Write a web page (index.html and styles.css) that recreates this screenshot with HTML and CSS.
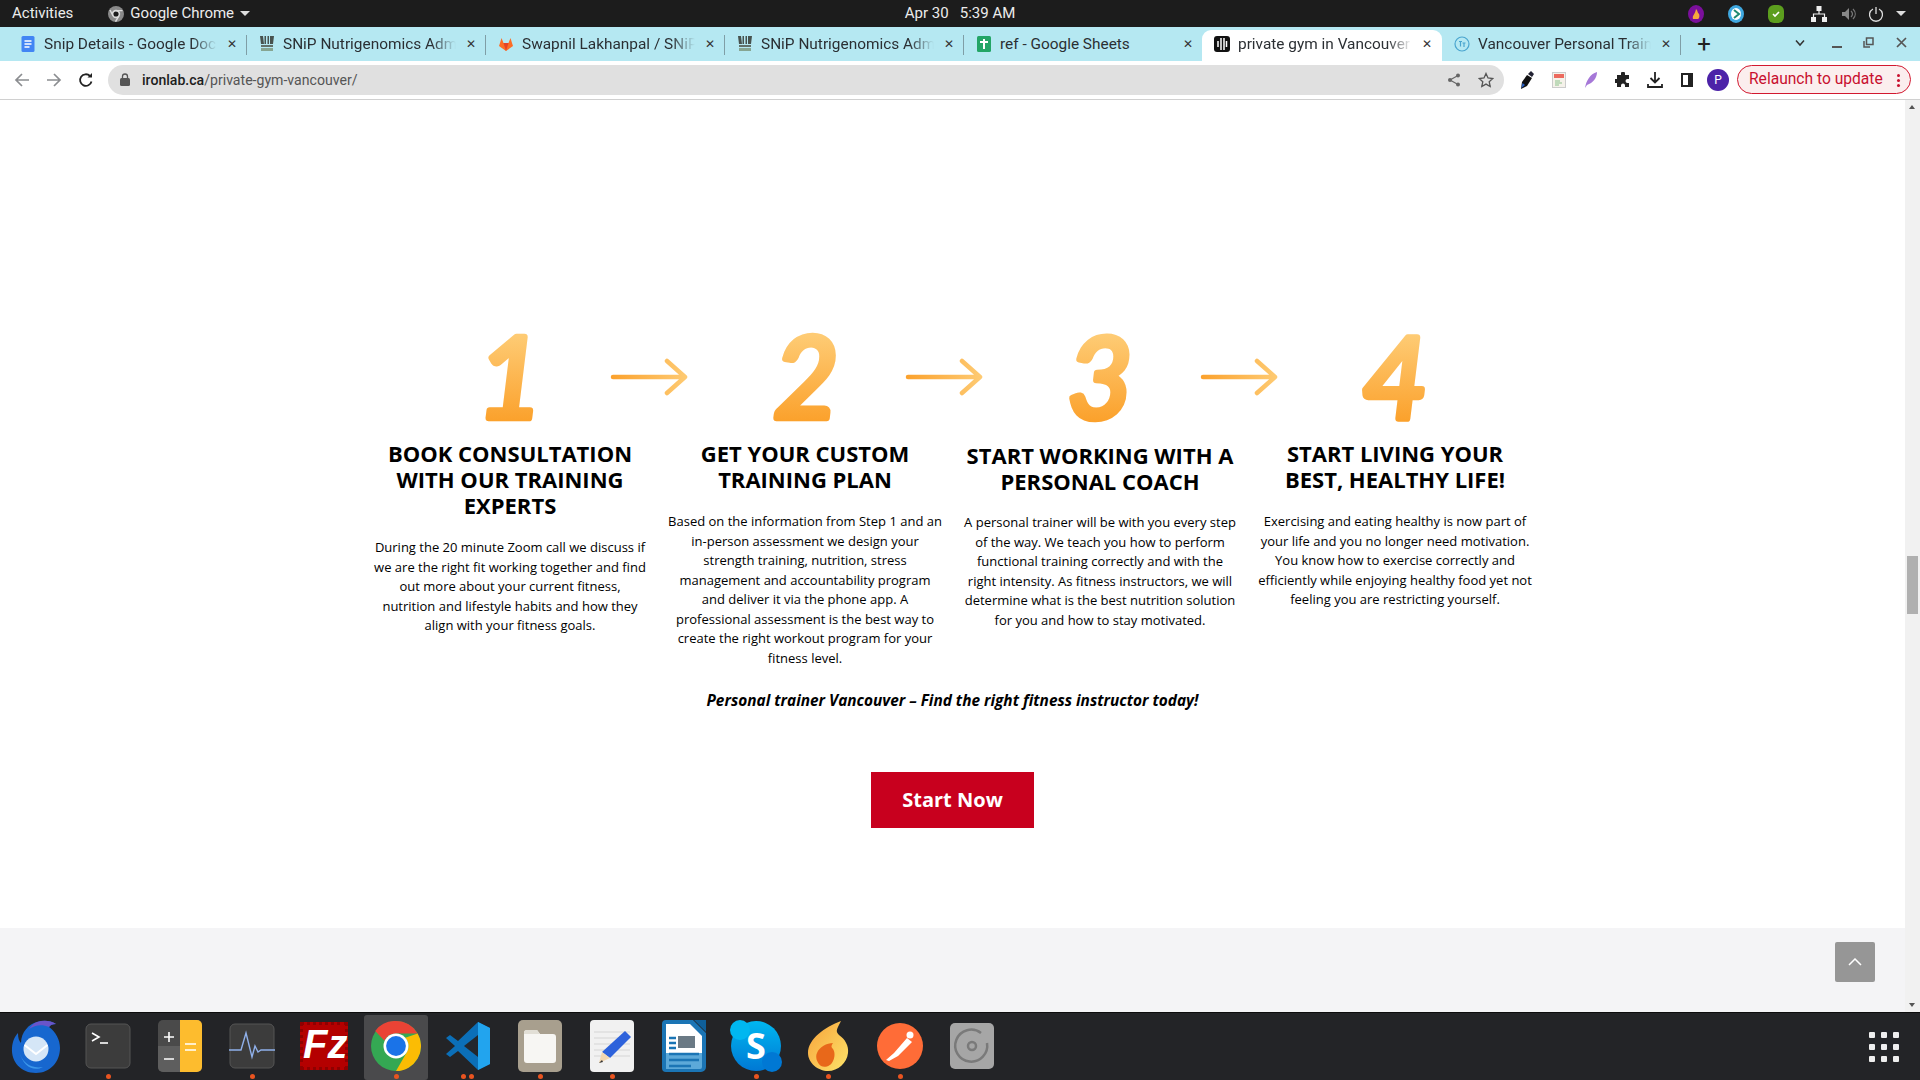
FILE: index.html
```html
<!DOCTYPE html>
<html lang="en">
<head>
<meta charset="utf-8">
<title>private gym in Vancouver</title>
<link rel="stylesheet" href="styles.css">
</head>
<body>
<header class="topbar">
  <div class="top-left">
    <span class="activities">Activities</span>
    <span class="app-menu">
      <svg width="16" height="16" viewBox="0 0 16 16"><circle cx="8" cy="8" r="8" fill="#8a8a8a"/><circle cx="8" cy="8" r="3.4" fill="#1c1c1c" stroke="#ddd" stroke-width="1.6"/><path d="M8 4.6h6.5M5 9.8 2 4M10.9 9.8 7.5 15.7" stroke="#ddd" stroke-width="1.4"/></svg>
      Google Chrome
      <i class="caret"></i>
    </span>
  </div>
  <div class="clock">Apr 30&nbsp;&nbsp;&nbsp;5:39 AM</div>
  <div class="tray">
    <svg class="tray-a" width="16" height="18" viewBox="0 0 16 18"><ellipse cx="8" cy="9" rx="8" ry="9" fill="#7b0f9c"/><path d="M5 14c-1-4 2-4 3-10 2 2 1 3 3 5 1 2 0 5-1 5z" fill="#f6a93b"/></svg>
    <svg class="tray-b" width="16" height="18" viewBox="0 0 16 18"><ellipse cx="8" cy="9" rx="8" ry="9" fill="#3fa8e0"/><ellipse cx="8" cy="9" rx="5" ry="6" fill="#fff"/><path d="M6 5l5 4-5 4" fill="none" stroke="#1f8a70" stroke-width="2"/></svg>
    <svg class="tray-c" width="16" height="18" viewBox="0 0 16 18"><rect width="16" height="18" rx="6" fill="#5c9e1e"/><path d="M5 9l2 2 4-4" fill="none" stroke="#fff" stroke-width="1.6"/></svg>
    <svg class="tray-d" width="16" height="16" viewBox="0 0 16 16" fill="#eee"><rect x="5.5" y="0" width="5" height="5"/><rect x="0" y="11" width="5" height="5"/><rect x="11" y="11" width="5" height="5"/><path d="M8 5v3M2.500 11V8h11v3" fill="none" stroke="#eee" stroke-width="1.2"/></svg>
    <svg class="tray-e" width="16" height="16" viewBox="0 0 16 16"><path d="M1 6h3l4-4v12l-4-4H1z" fill="#888"/><path d="M10 5c2 2 2 4 0 6M12 3c3 3 3 7 0 10" fill="none" stroke="#777" stroke-width="1.2"/></svg>
    <svg class="tray-f" width="16" height="16" viewBox="0 0 16 16" fill="none" stroke="#ddd" stroke-width="1.3"><path d="M5 3a6.500 6.500 0 1 0 6 0M8 1v7"/></svg>
    <i class="caret tray-caret"></i>
  </div>
</header>

<nav class="tabstrip">
  <div class="tab">
    <svg class="fav" width="16" height="16" viewBox="0 0 16 16"><rect x="1.500" width="13" height="16" rx="1.500" fill="#4285f4"/><path d="M4.500 5h7M4.500 8h7M4.500 11h5" stroke="#fff" stroke-width="1.300"/></svg>
    <span class="tab-title">Snip Details - Google Docs</span><span class="x">✕</span>
  </div>
  <div class="tab">
    <svg class="fav" width="16" height="18" viewBox="0 0 16 18"><path d="M1 1h3l1 8H2zM5.500 1H7v8H5.500zM8.500 1H10v8H8.500zM11 1h4l-1 8h-3z" fill="#47524e"/><path d="M2 10h12v2H2z" fill="#62706a"/><rect x="2" y="13" width="12" height="3" fill="#86a592"/></svg>
    <span class="tab-title">SNiP Nutrigenomics Admin</span><span class="x">✕</span>
  </div>
  <div class="tab">
    <svg class="fav" width="16" height="16" viewBox="0 0 16 16"><path d="M8 15 1 10l1-3 1.500-5L5.500 7h5l2-5L14 7l1 3z" fill="#fc6d26"/><path d="M8 15 5.500 7h5z" fill="#e24329"/></svg>
    <span class="tab-title">Swapnil Lakhanpal / SNiP</span><span class="x">✕</span>
  </div>
  <div class="tab">
    <svg class="fav" width="16" height="18" viewBox="0 0 16 18"><path d="M1 1h3l1 8H2zM5.500 1H7v8H5.500zM8.500 1H10v8H8.500zM11 1h4l-1 8h-3z" fill="#47524e"/><path d="M2 10h12v2H2z" fill="#62706a"/><rect x="2" y="13" width="12" height="3" fill="#86a592"/></svg>
    <span class="tab-title">SNiP Nutrigenomics Admin</span><span class="x">✕</span>
  </div>
  <div class="tab">
    <svg class="fav" width="16" height="16" viewBox="0 0 16 16"><rect x="1" width="14" height="16" rx="1.500" fill="#23a566"/><path d="M4 6h8M8 3v10" stroke="#fff" stroke-width="2"/></svg>
    <span class="tab-title tab-plain">ref - Google Sheets</span><span class="x">✕</span>
  </div>
  <div class="tab tab-active">
    <svg class="fav" width="16" height="16" viewBox="0 0 16 16"><rect width="16" height="16" rx="3" fill="#111"/><path d="M4 5v6M7 2v12M10 2v12M12.500 5v6" stroke="#fff" stroke-width="1.500"/></svg>
    <span class="tab-title">private gym in Vancouver</span><span class="x">✕</span>
  </div>
  <div class="tab tab-last">
    <svg class="fav" width="16" height="16" viewBox="0 0 16 16" fill="none" stroke="#4aa5cf" stroke-width="1.200"><circle cx="8" cy="8" r="7"/><path d="M5 5.500h3M6.500 5.500v5M8.500 7h3M10 7v4"/></svg>
    <span class="tab-title">Vancouver Personal Trainer</span><span class="x">✕</span>
  </div>
  <span class="newtab">+</span>
  <div class="win-controls">
    <svg width="12" height="8" viewBox="0 0 12 8" fill="none" stroke="#333" stroke-width="1.500"><path d="M2 1.500 6 6l4-4.500"/></svg>
    <svg class="win-min" width="10" height="10" viewBox="0 0 10 10"><rect y="8" width="10" height="2" fill="#555"/></svg>
    <svg class="win-max" width="11" height="11" viewBox="0 0 11 11" fill="none" stroke="#555" stroke-width="1.500"><rect x="3.500" y="1" width="6.500" height="6.500"/><path d="M1 4v6h6"/></svg>
    <svg class="win-close" width="11" height="11" viewBox="0 0 11 11" stroke="#555" stroke-width="1.700"><path d="M1 1l9 9M10 1l-9 9"/></svg>
  </div>
</nav>

<div class="toolbar">
  <span class="tool"><svg width="16" height="16" viewBox="0 0 16 16" fill="none" stroke="#8b8d90" stroke-width="1.700"><path d="M15 8H2M8 2 2 8l6 6"/></svg></span>
  <span class="tool"><svg width="16" height="16" viewBox="0 0 16 16" fill="none" stroke="#8b8d90" stroke-width="1.700"><path d="M1 8h13M8 2l6 6-6 6"/></svg></span>
  <span class="tool"><svg width="16" height="16" viewBox="0 0 16 16" fill="none" stroke="#222" stroke-width="1.800"><path d="M13.500 9.500A5.800 5.800 0 1 1 12 4"/><path d="M14 1v4.500H9.500" fill="#222" stroke="none"/></svg></span>
  <div class="omnibox">
    <svg width="10" height="13" viewBox="0 0 10 13"><rect y="5" width="10" height="8" rx="1.500" fill="#555"/><path d="M2.500 5V3.500a2.500 2.500 0 0 1 5 0V5" fill="none" stroke="#555" stroke-width="1.300"/></svg>
    <span class="url"><b>ironlab.ca</b>/private-gym-vancouver/</span>
    <svg class="omni-share" width="14" height="14" viewBox="0 0 14 14" fill="#666"><circle cx="11" cy="2.500" r="2"/><circle cx="3" cy="7" r="2"/><circle cx="11" cy="11.500" r="2"/><path d="M11 2.500 3 7l8 4.500" fill="none" stroke="#666" stroke-width="1.200"/></svg>
    <svg class="omni-star" width="16" height="16" viewBox="0 0 16 16" fill="none" stroke="#555" stroke-width="1.300"><path d="M8 1.500l2 4.500 4.800.5-3.600 3.200 1 4.800L8 12.100l-4.200 2.400 1-4.800L1.200 6.500 6 6z"/></svg>
  </div>
  <div class="extensions">
    <span class="tool"><svg width="16" height="20" viewBox="0 0 16 20"><path d="M2 19l1-7 5-7 5 3-5 8z" fill="#111"/><path d="M9 4l3-3 3 3-2 3z" fill="#223"/><path d="M2.500 18l1-5 2.500 2z" fill="#2a62c9"/></svg></span>
    <span class="tool"><svg width="14" height="16" viewBox="0 0 14 16"><rect x=".5" y=".5" width="13" height="15" fill="#f5f2ea" stroke="#ccc"/><rect x="2" y="2" width="10" height="4" fill="#ec6a5e"/><path d="M3 9h5M3 11h7M3 13h4" stroke="#8bc28b"/></svg></span>
    <span class="tool"><svg width="14" height="18" viewBox="0 0 14 18"><path d="M1 17C2 10 6 3 13 1c0 6-4 11-10 13z" fill="#a678d8"/></svg></span>
    <span class="tool"><svg width="16" height="16" viewBox="0 0 16 16" fill="#222"><path d="M6 1.500a2 2 0 0 1 4 0V3h4v4h-1.500a2 2 0 0 0 0 4H14v4h-4v-1.500a2 2 0 0 0-4 0V15H2v-4H.5a2 2 0 0 1 0-4H2V3h4z"/></svg></span>
    <span class="tool"><svg width="16" height="16" viewBox="0 0 16 16" fill="none" stroke="#222" stroke-width="1.800"><path d="M8 0v10M3.500 6 8 10.500 12.500 6M1 12v3h14v-3"/></svg></span>
    <span class="tool"><svg width="12" height="14" viewBox="0 0 12 14"><path d="M0 0h12v14H0z" fill="#222"/><rect x="2" y="2" width="5" height="10" fill="#fff"/></svg></span>
    <span class="avatar">P</span>
  </div>
  <div class="relaunch"><span>Relaunch to update</span><i class="dots"></i></div>
</div>

<div class="viewport">
  <main class="page">
    <section class="content">
      <div class="steps">
        <article class="step">
          <div class="digit-row">
            <svg class="digit" width="120" height="140" viewBox="0 0 120 140"><defs><linearGradient id="g1" gradientUnits="userSpaceOnUse" x1="0" y1="26" x2="0" y2="112"><stop offset="0" stop-color="#fecb74"/><stop offset="1" stop-color="#fba12c"/></linearGradient></defs><text class="digit-text" x="60" y="109" fill="url(#g1)" stroke="url(#g1)">1</text></svg>
            <svg class="arrow" width="78" height="38" viewBox="0 0 78 38"><defs><linearGradient id="a1" gradientUnits="userSpaceOnUse" x1="0" y1="0" x2="78" y2="0"><stop offset="0" stop-color="#fba12c"/><stop offset="1" stop-color="#fecb74"/></linearGradient></defs><path d="M3 19h71M57 3l18 16-18 16" fill="none" stroke="url(#a1)" stroke-width="4.500" stroke-linecap="round" stroke-linejoin="round"/></svg>
          </div>
          <h2>BOOK CONSULTATION WITH OUR TRAINING EXPERTS</h2>
          <p>During the 20 minute Zoom call we discuss if we are the right fit working together and find out more about your current fitness, nutrition and lifestyle habits and how they align with your fitness goals.</p>
        </article>
        <article class="step">
          <div class="digit-row">
            <svg class="digit" width="120" height="140" viewBox="0 0 120 140"><defs><linearGradient id="g2" gradientUnits="userSpaceOnUse" x1="0" y1="26" x2="0" y2="112"><stop offset="0" stop-color="#fecb74"/><stop offset="1" stop-color="#fba12c"/></linearGradient></defs><text class="digit-text" x="61" y="109" fill="url(#g2)" stroke="url(#g2)">2</text></svg>
            <svg class="arrow" width="78" height="38" viewBox="0 0 78 38"><defs><linearGradient id="a2" gradientUnits="userSpaceOnUse" x1="0" y1="0" x2="78" y2="0"><stop offset="0" stop-color="#fba12c"/><stop offset="1" stop-color="#fecb74"/></linearGradient></defs><path d="M3 19h71M57 3l18 16-18 16" fill="none" stroke="url(#a2)" stroke-width="4.500" stroke-linecap="round" stroke-linejoin="round"/></svg>
          </div>
          <h2>GET YOUR CUSTOM TRAINING PLAN</h2>
          <p>Based on the information from Step 1 and an in-person assessment we design your strength training, nutrition, stress management and accountability program and deliver it via the phone app. A professional assessment is the best way to create the right workout program for your fitness level.</p>
        </article>
        <article class="step step-low">
          <div class="digit-row">
            <svg class="digit" width="120" height="140" viewBox="0 0 120 140"><defs><linearGradient id="g3" gradientUnits="userSpaceOnUse" x1="0" y1="26" x2="0" y2="112"><stop offset="0" stop-color="#fecb74"/><stop offset="1" stop-color="#fba12c"/></linearGradient></defs><text class="digit-text" x="60" y="109" fill="url(#g3)" stroke="url(#g3)">3</text></svg>
            <svg class="arrow" width="78" height="38" viewBox="0 0 78 38"><defs><linearGradient id="a3" gradientUnits="userSpaceOnUse" x1="0" y1="0" x2="78" y2="0"><stop offset="0" stop-color="#fba12c"/><stop offset="1" stop-color="#fecb74"/></linearGradient></defs><path d="M3 19h71M57 3l18 16-18 16" fill="none" stroke="url(#a3)" stroke-width="4.500" stroke-linecap="round" stroke-linejoin="round"/></svg>
          </div>
          <h2>START WORKING WITH A PERSONAL COACH</h2>
          <p>A personal trainer will be with you every step of the way. We teach you how to perform functional training correctly and with the right intensity. As fitness instructors, we will determine what is the best nutrition solution for you and how to stay motivated.</p>
        </article>
        <article class="step">
          <div class="digit-row">
            <svg class="digit" width="120" height="140" viewBox="0 0 120 140"><defs><linearGradient id="g4" gradientUnits="userSpaceOnUse" x1="0" y1="26" x2="0" y2="112"><stop offset="0" stop-color="#fecb74"/><stop offset="1" stop-color="#fba12c"/></linearGradient></defs><text class="digit-text" x="60" y="109" fill="url(#g4)" stroke="url(#g4)">4</text></svg>
          </div>
          <h2>START LIVING YOUR BEST, HEALTHY LIFE!</h2>
          <p>Exercising and eating healthy is now part of your life and you no longer need motivation. You know how to exercise correctly and efficiently while enjoying healthy food yet not feeling you are restricting yourself.</p>
        </article>
      </div>
      <p class="tagline">Personal trainer Vancouver – Find the right fitness instructor today!</p>
      <a class="cta">Start Now</a>
    </section>
    <div class="band">
      <span class="to-top"><svg width="14" height="8" viewBox="0 0 14 8" fill="none" stroke="#fff" stroke-width="1.500"><path d="M1 7l6-6 6 6"/></svg></span>
    </div>
  </main>
  <aside class="scrollbar">
    <i class="arrow-up"></i>
    <i class="thumb"></i>
    <i class="arrow-down"></i>
  </aside>
</div>

<footer class="dock">
  <div class="dock-item">
    <svg width="50" height="56" viewBox="0 0 50 56"><path d="M25 55C10 55 0 44 1 30 1.500 23 4 18 7 15c0 5 1 8 3 10C10 14 18 6 26 4c6-2 13-2 19 2-3 0-6 1-7 3 7 5 11 13 11 21 0 14-10 25-24 25z" fill="#1767cf"/><path d="M26 4c6-2 13-2 19 2-3 0-6 1-7 3-7-3-14-2-20 2 2-3 5-6 8-7z" fill="#6a54c9"/><path d="M8 33c3 12 12 18 24 16-9 5-20 0-24-16z" fill="#3d98ea"/><circle cx="25" cy="31" r="12.500" fill="#d5e6f7"/><path d="M13.500 27 25 36l11.500-9" fill="none" stroke="#fff" stroke-width="2"/></svg>
  </div>
  <div class="dock-item has-dot">
    <svg width="46" height="46" viewBox="0 0 46 46"><rect x="1" y="1" width="44" height="44" rx="5" fill="#3c3c3c" stroke="#555"/><path d="M7 10l7 4-7 4" fill="none" stroke="#fff" stroke-width="1.600"/><path d="M15 20h8" stroke="#fff" stroke-width="1.600"/></svg>
  </div>
  <div class="dock-item">
    <svg width="46" height="54" viewBox="0 0 46 54"><rect x="1" y="1" width="44" height="52" rx="5" fill="#4a4a4a"/><path d="M1 27h22v26H6a5 5 0 0 1-5-5z" fill="#5e5e5e"/><path d="M23 1h17a5 5 0 0 1 5 5v42a5 5 0 0 1-5 5H23z" fill="#fdbc2e"/><path d="M7 18h10M12 13v10M7 40h10M28 25h11M28 31h11" stroke="#fff" stroke-width="1.600"/></svg>
  </div>
  <div class="dock-item has-dot">
    <svg width="46" height="46" viewBox="0 0 46 46"><rect x="1" y="1" width="44" height="44" rx="5" fill="#3c3c3c" stroke="#555"/><path d="M0 27h12l5-17 6 24 3-11 3 6 3-2h14" fill="none" stroke="#8fb0ea" stroke-width="1.400"/></svg>
  </div>
  <div class="dock-item">
    <div class="fz"><span>Fz</span></div>
  </div>
  <div class="dock-item has-dot dock-active">
    <svg width="50" height="50" viewBox="0 0 48 48"><circle cx="24" cy="24" r="24" fill="#34a853"/><path d="M24 0a24 24 0 0 1 20.800 12H24a12 12 0 0 0-11 7L4 9.500A24 24 0 0 1 24 0z" fill="#ea4335"/><path d="M44.800 12A24 24 0 0 1 24 48l10.400-18A12 12 0 0 0 33 16z" fill="#fbbc04"/><circle cx="24" cy="24" r="12" fill="#fff"/><circle cx="24" cy="24" r="9.500" fill="#1a73e8"/></svg>
  </div>
  <div class="dock-item has-dot2">
    <svg width="46" height="50" viewBox="0 0 46 50"><path d="M33 1 45 7v36l-12 6-20-19-8 6-4-3 9-8-9-8 4-3 8 6z" fill="#0b6fb8"/><path d="M33 1 45 7v36l-12 6z" fill="#22a4ee"/><path d="M33 14 19 25l14 11z" fill="#23272d"/></svg>
  </div>
  <div class="dock-item has-dot">
    <svg width="46" height="54" viewBox="0 0 46 54"><rect x="1" y="1" width="44" height="52" rx="5" fill="#a89f8e"/><path d="M7 14a3 3 0 0 1 3-3h10l3 4h13a3 3 0 0 1 3 3v23a3 3 0 0 1-3 3H10a3 3 0 0 1-3-3z" fill="#f7f6f3"/><path d="M7 14a3 3 0 0 1 3-3h10l3 4H7z" fill="#e2dfd6"/></svg>
  </div>
  <div class="dock-item has-dot">
    <svg width="46" height="54" viewBox="0 0 46 54"><rect x="1" y="1" width="44" height="52" rx="4" fill="#f1f1f1"/><path d="M5 13h36M5 19h36M5 25h36M5 31h36M5 37h36" stroke="#d5d5d5"/><path d="M36 12l6 6-21 21-8-6z" fill="#2d62db"/><path d="M13 33l8 6-11 5z" fill="#f2d7b0"/><path d="M10 44l3-3 1 2z" fill="#333"/></svg>
  </div>
  <div class="dock-item">
    <svg width="46" height="54" viewBox="0 0 46 54"><path d="M5 1h27l13 13v34a5 5 0 0 1-5 5H5a4 4 0 0 1-4-4V5a4 4 0 0 1 4-4z" fill="#1b75b5"/><path d="M5 34h36v14a2 2 0 0 1-2 2H5z" fill="#5ca9d9"/><path d="M5 5h24l12 12v17H5z" fill="#fff"/><path d="M33 1l12 12V1z" fill="#0f5f99"/><rect x="17" y="17" width="17" height="12" fill="#6b7a85"/><path d="M8 19h7M8 24h7M8 29h7M8 35h30M8 41h30M8 47h22" stroke="#1b75b5" stroke-width="2.400"/></svg>
  </div>
  <div class="dock-item has-dot">
    <div class="skype"><span>S</span></div>
  </div>
  <div class="dock-item has-dot">
    <svg width="42" height="50" viewBox="0 0 42 50"><defs><linearGradient id="sp" x1="0" y1="0" x2="1" y2="1"><stop offset="0" stop-color="#f7a13a"/><stop offset="1" stop-color="#fde46a"/></linearGradient></defs><path d="M34 0C30 8 28 10 32 14c6 4 10 11 9 18-1 10-10 18-20 18S1 42 1 32C1 18 18 6 34 0z" fill="url(#sp)"/><path d="M26 22c-2 3-2 4 0 6 2 3 2 8 0 12-2 5-8 7-12 5-4-3-6-9-4-13 2-6 10-10 16-10z" fill="#e8681a"/></svg>
  </div>
  <div class="dock-item has-dot">
    <svg width="46" height="46" viewBox="0 0 46 46"><circle cx="23" cy="23" r="23" fill="#ff6c37"/><circle cx="33" cy="12" r="3.500" fill="#fff"/><path d="M30 15 17 30l-8 7 3 1 9-5 14-14z" fill="#fff"/></svg>
  </div>
  <div class="dock-item">
    <svg width="46" height="46" viewBox="0 0 46 46"><rect x="1" y="0" width="44" height="46" rx="5" fill="#a6a6a6"/><path d="M32 10a16 16 0 1 0 6 10" fill="none" stroke="#7a7a7a" stroke-width="2.500"/><circle cx="23" cy="23" r="4" fill="none" stroke="#7a7a7a" stroke-width="2.500"/></svg>
  </div>
  <div class="grid-launcher">
    <i></i><i></i><i></i><i></i><i></i><i></i><i></i><i></i><i></i>
  </div>
</footer>
</body>
</html>
```
FILE: styles.css
```css
* { box-sizing: border-box; }
html, body { margin: 0; height: 100%; }
body {
  display: flex;
  flex-direction: column;
  height: 100vh;
  overflow: hidden;
  background: #fff;
  font-family: "Open Sans", sans-serif;
}
svg { display: block; flex: none; }

/* GNOME bar */
.topbar {
  height: 27px;
  flex: none;
  background: #1c1c1c;
  color: #ececec;
  font: 15px/27px Roboto, sans-serif;
  display: grid;
  grid-template-columns: 1fr auto 1fr;
  padding-left: 12px;
}
.top-left { display: flex; align-items: center; gap: 35px; }
.app-menu { display: flex; align-items: center; gap: 6px; }
.caret {
  width: 0; height: 0;
  border-left: 5px solid transparent;
  border-right: 5px solid transparent;
  border-top: 5px solid #ddd;
}
.clock { text-align: center; position: relative; left: -6px; }
.tray { display: flex; align-items: center; justify-content: flex-end; padding-right: 14px; }
.tray-a { margin-right: 24px; }
.tray-b { margin-right: 24px; }
.tray-c { margin-right: 27px; }
.tray-d { margin-right: 14px; }
.tray-e { margin-right: 11px; }
.tray-f { margin-right: 12px; }

/* Tabs */
.tabstrip {
  height: 34px;
  flex: none;
  background: #b5e8f2;
  display: flex;
  align-items: flex-end;
  padding-left: 8px;
  font: 15.400px Roboto, sans-serif;
  color: #2b2f33;
}
.tab {
  width: 239px;
  height: 31px;
  flex: none;
  padding: 0 8px 3px 12px;
  display: flex;
  align-items: center;
  gap: 8px;
  position: relative;
  border-radius: 9px 9px 0 0;
}
.tab::after {
  content: "";
  position: absolute;
  right: 0;
  top: 5px;
  height: 20px;
  width: 1px;
  background: #7f9ea6;
}
.tab-active { background: #fff; width: 240px; margin-left: -1px; }
.tab-active::after, .tab:nth-child(5)::after { display: none; }
.tab-title {
  flex: 1;
  min-width: 0;
  white-space: nowrap;
  overflow: hidden;
  -webkit-mask-image: linear-gradient(90deg, #000 86%, transparent 100%);
  mask-image: linear-gradient(90deg, #000 86%, transparent 100%);
}
.tab-plain { -webkit-mask-image: none; mask-image: none; }
.x { font-size: 12px; width: 14px; text-align: center; color: #333; }
.newtab { font-size: 24px; line-height: 30px; width: 20px; margin-left: 13px; text-align: center; align-self: center; color: #222; }
.win-controls { display: flex; align-items: center; margin-left: 80px; padding-bottom: 3px; align-self: center; }
.win-min { margin-left: 26px; }
.win-max { margin-left: 21px; }
.win-close { margin-left: 22px; }

/* Toolbar */
.toolbar {
  height: 39px;
  flex: none;
  background: #fff;
  border-bottom: 1px solid #d0d0d0;
  display: flex;
  align-items: center;
  padding: 0 0 1px 6px;
}
.tool { width: 32px; height: 30px; display: flex; align-items: center; justify-content: center; flex: none; }
.omnibox {
  width: 1396px;
  height: 30px;
  margin-left: 6px;
  background: #e0e0e0;
  border-radius: 15px;
  display: flex;
  align-items: center;
  padding-left: 12px;
  flex: none;
}
.url { font: 14.100px Roboto, sans-serif; color: #555; margin-left: 12px; flex: 1; }
.url b { font-weight: 500; color: #1d1d1d; }
.omni-share { margin-right: 17px; }
.omni-star { margin-right: 10px; }
.extensions { display: flex; align-items: center; margin-left: 7px; }
.avatar {
  width: 22px; height: 22px;
  margin: 0 6px 0 4px;
  border-radius: 50%;
  background: #4c22a8;
  color: #fff;
  font: 12px/22px Roboto, sans-serif;
  text-align: center;
}
.relaunch {
  width: 174px;
  height: 29px;
  border: 1px solid #d2182f;
  border-radius: 15px;
  background: #fbeeee;
  color: #c8102e;
  font: 15.600px/27px Roboto, sans-serif;
  padding-left: 11px;
  display: flex;
  align-items: center;
  margin-left: 2px;
  position: relative;
}
.dots {
  position: absolute;
  right: 10px;
  top: 8px;
  width: 3px;
  height: 3px;
  background: #c8102e;
  box-shadow: 0 5px 0 #c8102e, 0 10px 0 #c8102e;
  border-radius: 50%;
}

/* Page */
.viewport { flex: 1; min-height: 0; display: flex; }
.page { flex: 1; min-width: 0; display: flex; flex-direction: column; }
.content {
  flex: 1;
  padding-top: 230px;
  display: flex;
  flex-direction: column;
  align-items: center;
  color: #000;
}
.steps { display: grid; grid-template-columns: repeat(4, 295px); height: 338px; }
.step { text-align: center; padding: 0 10px; }
.digit-row { position: relative; height: 100px; display: flex; justify-content: center; }
.digit { margin: -21px 0 -19px; }
.digit-text {
  font: italic 400 113px Lato, sans-serif;
  text-anchor: middle;
  stroke-width: 6.500;
  stroke-linejoin: round;
}
.arrow { position: absolute; left: 237px; top: 28px; }
.step h2 {
  margin: 10px 0 20px;
  font: 700 22px/26px "Open Sans", sans-serif;
}
.step-low h2 { margin-top: 12px; margin-bottom: 19px; }
.step p {
  margin: 0;
  font: 400 13px/19.500px "Open Sans", sans-serif;
}
.tagline {
  margin: 21px 0 0;
  font: italic 700 15.400px/24px "Open Sans", sans-serif;
}
.cta {
  margin-top: 59px;
  width: 163px;
  height: 56px;
  background: #c8001e;
  color: #fff;
  font: 700 20px/56px "Open Sans", sans-serif;
  text-align: center;
}
.band {
  height: 84px;
  flex: none;
  background: #f4f4f6;
  display: flex;
  justify-content: flex-end;
  align-items: flex-start;
  padding: 14px 30px 0 0;
}
.to-top {
  width: 40px; height: 40px;
  background: #969696;
  border-radius: 2px;
  display: flex;
  align-items: center;
  justify-content: center;
}
.scrollbar {
  width: 15px;
  flex: none;
  background: #f1f1f1;
  position: relative;
}
.thumb { position: absolute; left: 2px; width: 11px; top: 456px; height: 58px; background: #b0b0b0; }
.arrow-up, .arrow-down { position: absolute; left: 4px; width: 0; height: 0; border-left: 3.500px solid transparent; border-right: 3.500px solid transparent; }
.arrow-up { top: 5px; border-bottom: 4px solid #555; }
.arrow-down { bottom: 5px; border-top: 4px solid #555; }

/* Dock */
.dock {
  height: 68px;
  flex: none;
  background: #232427;
  border-top: 1px solid #0c0c0c;
  display: flex;
  position: relative;
}
.dock-item {
  width: 72px;
  height: 67px;
  flex: none;
  display: flex;
  align-items: center;
  justify-content: center;
  position: relative;
  padding-bottom: 2px;
}
.has-dot::after, .has-dot2::after {
  content: "";
  position: absolute;
  bottom: 1px;
  left: 33.500px;
  width: 5px;
  height: 5px;
  border-radius: 50%;
  background: #e95420;
}
.has-dot2::after { left: 29px; box-shadow: 8px 0 0 #e95420; }
.dock-active::before {
  content: "";
  position: absolute;
  left: 4px;
  right: 4px;
  top: 2px;
  bottom: 0;
  background: #4a4a4c;
  border-radius: 3px;
}
.dock-item svg, .dock-item > div { position: relative; }
.fz {
  width: 48px; height: 48px;
  background: #b40000;
  border: 3px dotted #8f0000;
  color: #fff;
  font: italic 700 40px/38px "Liberation Sans", sans-serif;
  text-align: center;
}
.skype {
  width: 50px; height: 50px;
  border-radius: 50%;
  background: linear-gradient(#00b7f0, #0078d4);
  color: #fff;
  font: 700 36px/50px "Open Sans", sans-serif;
  text-align: center;
}
.skype::before, .skype::after {
  content: "";
  position: absolute;
  width: 20px;
  height: 20px;
  border-radius: 50%;
  z-index: -1;
}
.skype { z-index: 0; }
.skype::before { left: -1px; top: -1px; background: #00b7f0; }
.skype::after { right: -1px; bottom: -1px; background: #0078d4; }
.grid-launcher {
  margin-left: auto;
  margin-right: 21px;
  align-self: center;
  display: grid;
  grid-template-columns: repeat(3, 6px);
  gap: 6px;
}
.grid-launcher i { width: 6px; height: 6px; background: #eee; border-radius: 1px; }
```
